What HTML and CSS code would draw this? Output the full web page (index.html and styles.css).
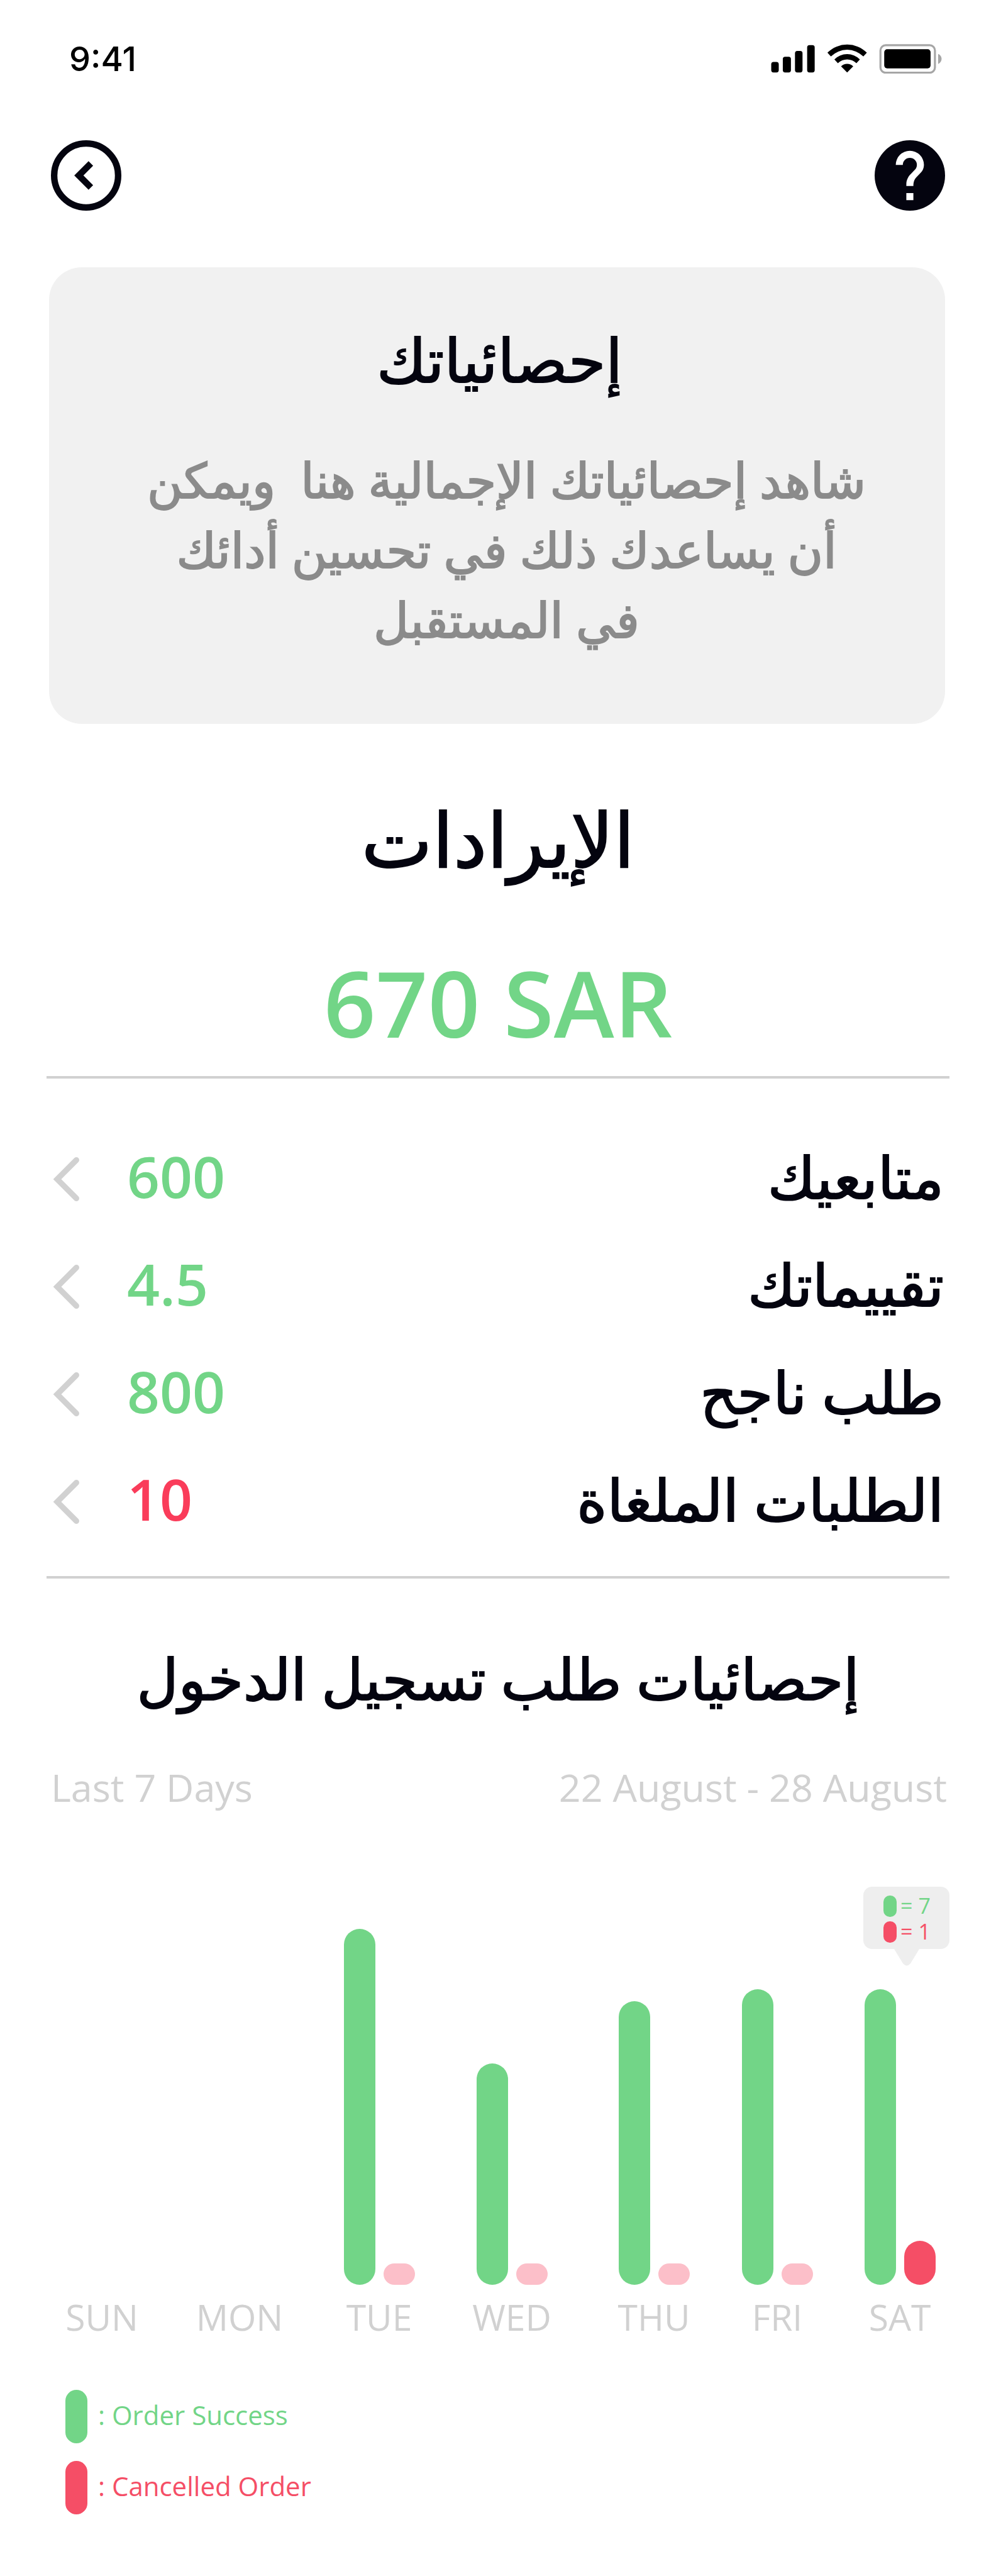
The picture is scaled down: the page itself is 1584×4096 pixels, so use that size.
FILE: index.html
```html
<!DOCTYPE html>
<html lang="ar">
<head>
<meta charset="utf-8">
<meta name="viewport" content="width=device-width, initial-scale=1">
<title>إحصائياتك</title>
<link rel="stylesheet" href="styles.css">
</head>
<body>
<header>
  <div class="status-bar">
    <span class="time">9:41</span>
    <svg class="status-icons" viewBox="1325 76 294 51" aria-hidden="true">
      <rect x="1325" y="107" width="13" height="18" rx="4"/>
      <rect x="1345" y="98" width="14" height="27" rx="4"/>
      <rect x="1366" y="88" width="13" height="37" rx="4"/>
      <rect x="1387" y="78" width="13" height="47" rx="4"/>
      <path d="M1422 91a48 48 0 0 1 68 0l-6 6.500a39.500 39.500 0 0 0-56 0z"/>
      <path d="M1434 102.500a31 31 0 0 1 44 0l-6 6.500a23 23 0 0 0-32 0z"/>
      <path d="M1445.500 114.500a15 15 0 0 1 21 0l-10.500 10.500z"/>
      <rect x="1513.500" y="78" width="94" height="47.500" rx="9" fill="none" stroke="#a6a6a6" stroke-width="3.500"/>
      <rect x="1520" y="85" width="80" height="33" rx="5"/>
      <path fill="#a6a6a6" d="M1613 93c8 3 8 14 0 17.500z"/>
    </svg>
  </div>
  <nav class="top-nav">
    <button type="button" class="icon-button" aria-label="رجوع">
      <svg viewBox="0 0 120 120" aria-hidden="true"><circle cx="60" cy="60" r="54.500" fill="none" stroke="#04040f" stroke-width="11"/><path d="M68 39.500 47.500 60 68 80.500" fill="none" stroke="#04040f" stroke-width="11"/></svg>
    </button>
    <button type="button" class="icon-button" aria-label="مساعدة">
      <svg viewBox="0 0 24 24" aria-hidden="true"><path fill="#04040f" d="M12 0a12 12 0 1 0 0 24 12 12 0 0 0 0-24zm1.200 20.400h-2.400V18h2.400zm2.480-9.300-1.080 1.100c-.860.880-1.400 1.600-1.400 3.400h-2.400V15c0-1.320.540-2.520 1.400-3.400l1.490-1.510c.440-.430.710-1.030.710-1.690a2.400 2.400 0 0 0-4.800 0H7.200a4.800 4.800 0 0 1 9.600 0c0 1.060-.430 2.010-1.120 2.700z"/></svg>
    </button>
  </nav>
</header>
<main>
  <section class="intro" dir="rtl">
    <h1>إحصائياتك</h1>
    <p>شاهد إحصائياتك الإجمالية هنا &nbsp;ويمكن<br>أن يساعدك ذلك في تحسين أدائك<br>في المستقبل</p>
  </section>
  <section class="revenue">
    <h2 dir="rtl">الإيرادات</h2>
    <p class="amount">670 SAR</p>
  </section>
  <ul class="stats">
    <li><a href="#followers"><svg viewBox="0 0 42 70" aria-hidden="true"><path d="M37.500 4.500 7 35l30.500 30.500"/></svg><span class="value">600</span><span class="label" dir="rtl">متابعيك</span></a></li>
    <li><a href="#ratings"><svg viewBox="0 0 42 70" aria-hidden="true"><path d="M37.500 4.500 7 35l30.500 30.500"/></svg><span class="value">4.5</span><span class="label" dir="rtl">تقييماتك</span></a></li>
    <li><a href="#success"><svg viewBox="0 0 42 70" aria-hidden="true"><path d="M37.500 4.500 7 35l30.500 30.500"/></svg><span class="value">800</span><span class="label" dir="rtl">طلب ناجح</span></a></li>
    <li><a href="#cancelled"><svg viewBox="0 0 42 70" aria-hidden="true"><path d="M37.500 4.500 7 35l30.500 30.500"/></svg><span class="value negative">10</span><span class="label" dir="rtl">الطلبات الملغاة</span></a></li>
  </ul>
  <section class="report">
    <h2 dir="rtl">إحصائيات طلب تسجيل الدخول</h2>
    <div class="range" lang="en"><span>Last 7 Days</span><span>22 August - 28 August</span></div>
    <div class="chart" lang="en">
      <div class="day"><div class="bars"></div><span>SUN</span></div>
      <div class="day"><div class="bars"></div><span>MON</span></div>
      <div class="day"><div class="bars"><i class="bar" style="height:566px"></i><i class="bar none"></i></div><span>TUE</span></div>
      <div class="day"><div class="bars"><i class="bar" style="height:352px"></i><i class="bar none"></i></div><span>WED</span></div>
      <div class="day"><div class="bars"><i class="bar" style="height:451px"></i><i class="bar none"></i></div><span>THU</span></div>
      <div class="day"><div class="bars"><i class="bar" style="height:470px"></i><i class="bar none"></i></div><span>FRI</span></div>
      <div class="day"><div class="bars"><i class="bar" style="height:470px"></i><i class="bar cancelled" style="height:70px"></i></div><span>SAT</span></div>
      <div class="tooltip" role="tooltip">
        <p><i></i>= <b>7</b></p>
        <p class="cancelled"><i></i>= <b>1</b></p>
        <svg viewBox="0 0 40 27" aria-hidden="true"><path fill="#eee" d="M0 0h40L26 23q-6 7-12 0z"/></svg>
      </div>
    </div>
    <ul class="legend" lang="en">
      <li><i></i><span>: Order Success</span></li>
      <li class="cancelled"><i></i><span>: Cancelled Order</span></li>
    </ul>
  </section>
</main>
</body>
</html>
```
FILE: styles.css
```css
* { box-sizing: border-box; }

body, h1, h2, p, ul { margin: 0; padding: 0; }

body {
  background: #fff;
  color: #04040f;
  font-family: "Open Sans", "Noto Sans", "DejaVu Sans", sans-serif;
}

h1, h2, .label { font-weight: 400; }
ul { list-style: none; }
svg { display: block; }

/* Arabic copy is set a touch heavier than regular */
h1, h2, .label, .intro p { -webkit-text-stroke: 2px currentColor; }

.status-bar {
  display: flex;
  justify-content: space-between;
  align-items: center;
  padding: 70px 86px 0 110px;
}
.time {
  color: #000;
  font: 500 54px/47px "Inter", sans-serif;
}
.status-icons { width: 272px; height: 47px; }

.top-nav {
  display: flex;
  justify-content: space-between;
  padding: 106px 81px 0;
}
.icon-button {
  width: 112px;
  height: 112px;
  padding: 0;
  border: 0;
  border-radius: 50%;
  background: none;
}
.icon-button svg { width: 100%; height: 100%; }

.intro {
  margin: 90px 81px 0 78px;
  padding: 86px 0 111px 30px;
  border-radius: 52px;
  background: #f1f1f1;
  text-align: center;
}
.intro h1 {
  margin-right: 22px;
  font-size: 96px;
  line-height: 120px;
}
.intro p {
  margin-top: 76px;
  color: #8b8b8b;
  font-size: 77px;
  line-height: 111px;
}

.revenue {
  margin: 0 74px;
  padding: 102px 0 27px;
  border-bottom: 4px solid #d1d1d1;
  text-align: center;
}
.revenue h2 { font-size: 120px; line-height: 160px; }
.amount {
  margin-top: 91px;
  color: #72d587;
  font-size: 145px;
  font-weight: 600;
  line-height: 180px;
}

.stats {
  margin: 0 74px;
  padding: 70px 9px 37px 10px;
  border-bottom: 4px solid #d1d1d1;
}
.stats a {
  display: flex;
  align-items: center;
  color: inherit;
  font-size: 91px;
  line-height: 171px;
  text-decoration: none;
}
.stats svg {
  width: 42px;
  height: 70px;
  margin: 8px 76px 0 0;
  fill: none;
  stroke: #d1d1d1;
  stroke-width: 9;
  stroke-linecap: round;
}
.value { color: #72d587; font-weight: 600; }
.value.negative { color: #fa3c5a; }
.label { margin-left: auto; font-size: 92px; }

.report { padding: 98px 0 97px; }
.report h2 {
  font-size: 91px;
  line-height: 120px;
  text-align: center;
}
.range {
  display: flex;
  justify-content: space-between;
  margin: 72px 78px 0 81px;
  color: #d1d1d1;
  font-size: 61px;
  line-height: 84px;
}

.chart {
  position: relative;
  display: grid;
  grid-template-columns: 120fr 318fr 126fr 296fr 156fr 236fr 154fr;
  margin-top: 116px;
  padding: 0 76px 0 102px;
}
.day {
  display: flex;
  flex-direction: column;
  align-items: center;
  gap: 11px;
  color: #d1d1d1;
  font-size: 57px;
  line-height: 80px;
}
.bars {
  display: flex;
  align-items: flex-end;
  gap: 13px;
  height: 633px;
}
.bar {
  width: 50px;
  border-radius: 25px;
  background: #72d587;
}
.bar.none {
  height: 34px;
  border-radius: 17px;
  background: #fcbfc9;
}
.bar.cancelled { background: #f54e66; }

.tooltip {
  position: absolute;
  top: 0;
  right: 74px;
  width: 137px;
  padding: 10px 30px 7px 32px;
  border-radius: 14px;
  background: #eee;
  font-size: 34px;
  line-height: 41px;
}
.tooltip p {
  display: flex;
  align-items: center;
  gap: 6px;
  color: #72d587;
}
.tooltip p.cancelled { color: #f54e66; }
.tooltip i {
  width: 21px;
  height: 34px;
  border-radius: 10px;
  background: currentColor;
}
.tooltip b { margin-left: auto; font-weight: 400; }
.tooltip svg {
  position: absolute;
  top: 100%;
  left: 50%;
  width: 40px;
  height: 27px;
  margin-left: -20px;
}

.legend {
  display: grid;
  gap: 28px;
  margin-top: 76px;
  padding-left: 104px;
}
.legend li {
  display: flex;
  align-items: center;
  gap: 17px;
  color: #72d587;
  font-size: 42px;
  line-height: 60px;
}
.legend li.cancelled { color: #f54e66; }
.legend i {
  width: 35px;
  height: 85px;
  border-radius: 18px;
  background: currentColor;
}
.legend span { padding-bottom: 6px; }
```
